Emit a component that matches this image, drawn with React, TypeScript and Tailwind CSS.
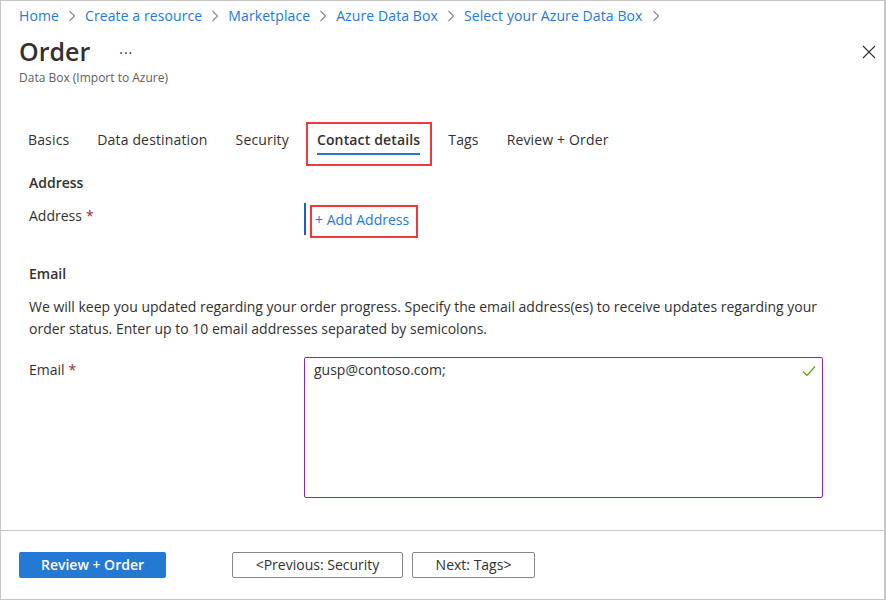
import React from "react";

const crumbs = [
  "Home",
  "Create a resource",
  "Marketplace",
  "Azure Data Box",
  "Select your Azure Data Box",
];

const tabs = [
  "Basics",
  "Data destination",
  "Security",
  "Contact details",
  "Tags",
  "Review + Order",
];

function Chevron() {
  return (
    <svg width="8" height="12" viewBox="0 0 8 12" className="mx-[9px]">
      <path d="M1.5 1 L6.5 6 L1.5 11" fill="none" stroke="#8a8886" strokeWidth="1.1" />
    </svg>
  );
}

function Required() {
  return <span className="text-[#a4262c] ml-[4px]">*</span>;
}

export default function App() {
  return (
    <div className="w-[886px] h-[600px] bg-white border border-r-2 border-[#c6c6c6] flex flex-col font-['Open_Sans',sans-serif] text-[#323130] text-[14px] overflow-hidden">
      <div className="flex-1 px-[18px]">
        {/* Breadcrumb */}
        <div className="flex items-center h-[20px] mt-[5px] leading-[20px] text-[#2479d5] tracking-[0.1px]">
          {crumbs.map((c) => (
            <React.Fragment key={c}>
              <span>{c}</span>
              <Chevron />
            </React.Fragment>
          ))}
        </div>

        {/* Title */}
        <div className="flex items-start justify-between mt-[9px]">
          <div className="flex items-center">
            <h1 className="text-[25px] leading-[32px] font-semibold">Order</h1>
            <span className="ml-[29px] mt-[2px] text-[14px] tracking-[1px]">···</span>
          </div>
          <svg width="14" height="14" viewBox="0 0 14 14" className="mt-[10px] mr-[-10px]">
            <path d="M1 1 L13 13 M13 1 L1 13" stroke="#323130" strokeWidth="1.1" />
          </svg>
        </div>
        <div className="text-[12px] leading-[16px] mt-[3px] text-[#605e5c]">
          Data Box (Import to Azure)
        </div>

        {/* Tabs */}
        <div className="flex gap-[28px] pl-[9px] mt-[44px] tracking-[0.15px]">
          {tabs.map((t) => {
            const active = t === "Contact details";
            return (
              <div key={t} className="relative flex flex-col">
                <span className={active ? "leading-[20px] font-semibold" : "leading-[20px]"}>
                  {t}
                </span>
                <div className={active ? "mt-[3px] h-[2px] bg-[#2479d5]" : "mt-[3px] h-[2px]"} />
                {active && (
                  <div className="absolute left-[-11px] right-[-12px] top-[-8px] h-[44px] border-2 border-[#f0393d]" />
                )}
              </div>
            );
          })}
        </div>

        <div className="pl-[10px]">
          {/* Address */}
          <h2 className="font-semibold leading-[20px] mt-[18px]">Address</h2>
          <div className="flex items-start mt-[10px]">
            <div className="w-[275px] mt-[3px] leading-[20px]">
              Address
              <Required />
            </div>
            <div className="h-[32px] border-l-2 border-[#1e5bd6] flex items-center pl-[9px]">
              <span className="relative leading-[20px] text-[#2479d5] mt-[1px]">
                + Add Address
                <span className="absolute left-[-5px] right-[-9px] top-[-5px] bottom-[-8px] border-2 border-[#f0393d]" />
              </span>
            </div>
          </div>

          {/* Email */}
          <h2 className="font-semibold leading-[20px] mt-[29px]">Email</h2>
          <p className="leading-[22px] mt-[12px] w-[800px]">
            We will keep you updated regarding your order progress. Specify the email address(es) to
            receive updates regarding your order status. Enter up to 10 email addresses separated by
            semicolons.
          </p>
          <div className="flex items-start mt-[17px]">
            <div className="w-[275px] mt-[3px] leading-[20px]">
              Email
              <Required />
            </div>
            <div className="w-[519px] h-[141px] border border-[#8a2da5] rounded-[2px] flex justify-between pl-[9px] pr-[6px] pt-[2px]">
              <span className="leading-[20px]">gusp@contoso.com;</span>
              <svg width="14" height="12" viewBox="0 0 14 12" className="mt-[5px]">
                <path d="M1 6.5 L5 10.5 L13 1.5" fill="none" stroke="#57a300" strokeWidth="1.2" />
              </svg>
            </div>
          </div>
        </div>
      </div>

      {/* Footer */}
      <div className="h-[69px] border-t border-[#c6c6c6] flex items-center px-[18px]">
        <button className="w-[147px] h-[26px] bg-[#2479d5] text-white font-semibold rounded-[2px] leading-[20px]">
          Review + Order
        </button>
        <button className="ml-[66px] w-[171px] h-[26px] border border-[#8a8886] rounded-[2px] leading-[20px]">
          &lt;Previous: Security
        </button>
        <button className="ml-[9px] w-[123px] h-[26px] border border-[#8a8886] rounded-[2px] leading-[20px]">
          Next: Tags&gt;
        </button>
      </div>
    </div>
  );
}
